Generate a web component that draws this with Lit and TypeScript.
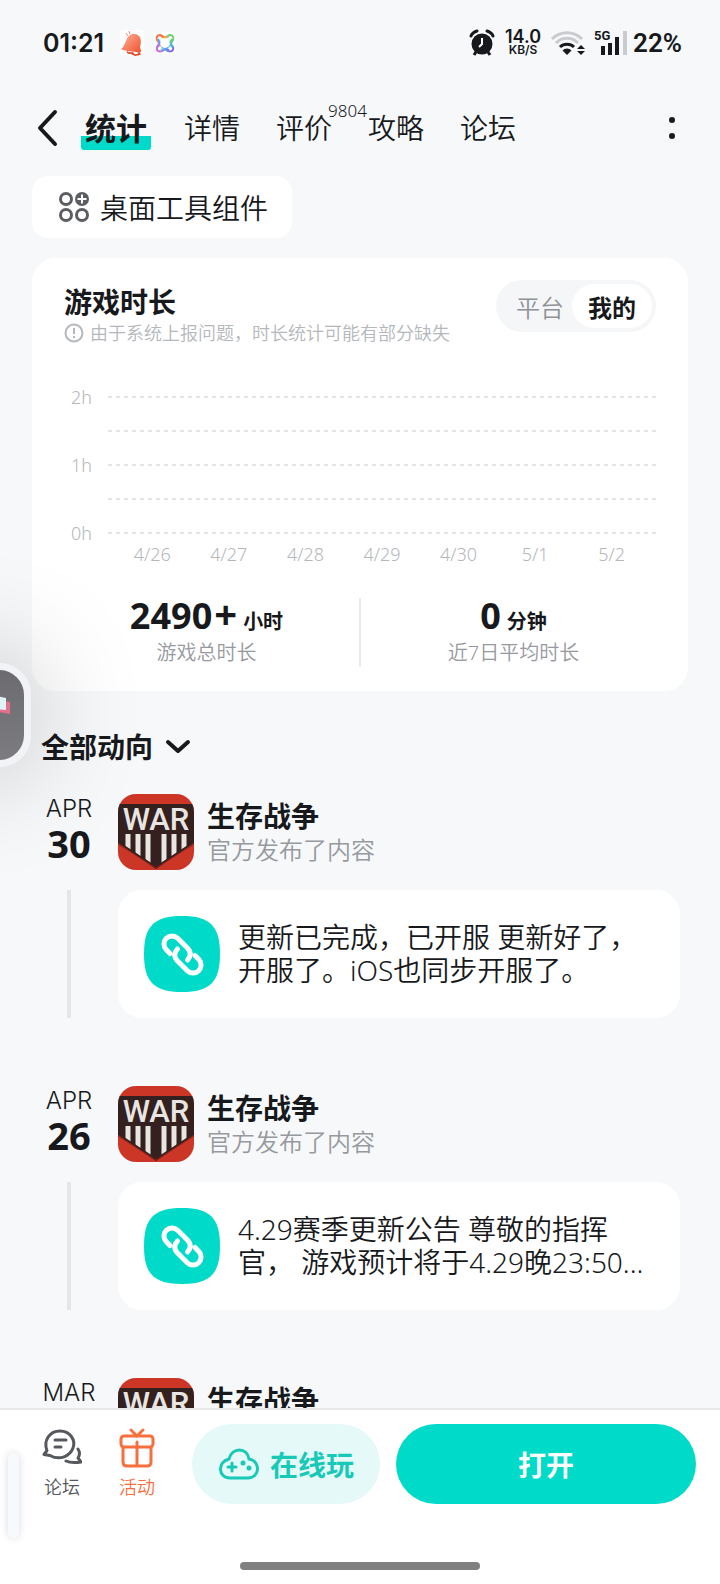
import { LitElement, html, svg, css } from 'lit';
import { customElement, property, state } from 'lit/decorators.js';
import { classMap } from 'lit/directives/class-map.js';

const tabs = [
  { name: '统计' },
  { name: '详情' },
  { name: '评价', count: 9804 },
  { name: '攻略' },
  { name: '论坛' },
];

const days = ['4/26', '4/27', '4/28', '4/29', '4/30', '5/1', '5/2'];
const hours = ['2h', '', '1h', '', '0h'];

const feed = [
  { month: 'APR', day: '30', text: '更新已完成，已开服 更新好了，开服了。iOS也同步开服了。' },
  { month: 'APR', day: '26', text: '4.29赛季更新公告 尊敬的指挥官， 游戏预计将于4.29晚23:50...' },
  { month: 'MAR', day: '', text: '' },
];

@customElement('status-bar')
export class StatusBar extends LitElement {
  static styles = css`
    :host {
      display: flex;
      align-items: center;
      justify-content: space-between;
      height: 86px;
      padding: 0 38px 0 43px;
      font-family: Inter, 'Noto Sans', sans-serif;
      font-weight: 600;
      font-size: 25px;
    }

    .side {
      display: flex;
      align-items: center;
      gap: 10px;
    }

    .time {
      margin-right: 6px;
    }

    .speed {
      display: flex;
      flex-direction: column;
      align-items: center;
      font-size: 18px;
      line-height: 14px;
    }

    .speed small {
      font-size: 12px;
      line-height: 12px;
    }

    .signal {
      display: flex;
      align-items: center;
      gap: 6px;
      font-family: Roboto, sans-serif;
      font-size: 26px;
    }

    .net {
      font: 700 13px Roboto, sans-serif;
    }

    svg {
      display: block;
      overflow: visible;
    }
  `;

  render() {
    return html`
      <div class="side">
        <span class="time">01:21</span>
        <svg width="24" height="26" viewBox="0 0 24 26">
          <defs>
            <linearGradient id="bell" x1="0" y1="0" x2="1" y2="1">
              <stop offset="0" stop-color="#ffb49a" />
              <stop offset="1" stop-color="#f0512c" />
            </linearGradient>
          </defs>
          <rect width="24" height="26" rx="4" fill="#fff" />
          <path d="M1 19C7 15 5 4 14 4c7 0 8 7 6 13l1 4c0 2-3 2-5 1C11 21 4 21 1 19z" fill="url(#bell)" />
          <path d="M7 21c2 2 4 1 6 1 1 3 5 3 6 0l2 2c-1 2-4 1-5 2-2 0-4-2-6-2s-4-1-3-3z" fill="#dc4a26" />
          <path d="M6 3l2 3M9 1l1 3" stroke="#e98a70" stroke-width="1" />
        </svg>
        <svg width="22" height="22" viewBox="0 0 22 22" fill="none" stroke-width="2">
          <defs>
            <linearGradient id="knot" x1="0" y1="0" x2="1" y2="1">
              <stop offset="0" stop-color="#ff5a52" />
              <stop offset=".35" stop-color="#ffb02e" />
              <stop offset=".6" stop-color="#45c8e8" />
              <stop offset="1" stop-color="#8a5cf0" />
            </linearGradient>
            <linearGradient id="knot2" x1="1" y1="0" x2="0" y2="1">
              <stop offset="0" stop-color="#6fdc5a" />
              <stop offset=".5" stop-color="#3fb5f5" />
              <stop offset="1" stop-color="#e05adf" />
            </linearGradient>
          </defs>
          <rect width="22" height="22" rx="4" fill="#fff" />
          <path d="M6 3c-3 0-4 3-3 5 2 4 7 9 11 11 3 1 6 0 5-4C17 11 10 4 6 3z" stroke="url(#knot)" />
          <path d="M16 3c3 0 4 3 3 5-2 4-7 9-11 11-3 1-6 0-5-4C5 11 12 4 16 3z" stroke="url(#knot2)" />
          <circle cx="11" cy="11" r="5" fill="#fff" />
          <path d="M7 4c3 2 5 2 8 0M7 18c3-2 5-2 8 0" stroke="url(#knot)" />
          <path d="M4 7c2 3 2 5 0 8M18 7c-2 3-2 5 0 8" stroke="url(#knot2)" />
        </svg>
      </div>
      <div class="side">
        <svg width="26" height="26" viewBox="0 0 26 26">
          <circle cx="13" cy="14" r="10.5" fill="#17191c" />
          <path d="M2 6c1-3 3-4 6-5M24 6c-1-3-3-4-6-5" stroke="#17191c" stroke-width="3" stroke-linecap="round" fill="none" />
          <path d="M7 22l-2 3M19 22l2 3" stroke="#17191c" stroke-width="3" />
          <path d="M13 8v6l-3 3" stroke="#fff" stroke-width="2" fill="none" />
        </svg>
        <span class="speed">14.0<small>KB/S</small></span>
        <svg width="34" height="26" viewBox="0 0 34 26" fill="none">
          <path d="M1 9a21 21 0 0 1 30 0M5 13a15 15 0 0 1 22 0" stroke="#c9cbce" stroke-width="3" />
          <path d="M9 17a10 10 0 0 1 14 0" stroke="#17191c" stroke-width="3" />
          <path d="M11.500 20.500a6 6 0 0 1 9 0L16 25z" fill="#17191c" />
          <path d="M30 15l4 4h-8zM30 25l4-4h-8z" fill="#17191c" />
        </svg>
        <span class="signal">
          <svg width="32" height="26" viewBox="0 0 32 26">
            <text class="net" x="-1" y="10" fill="#17191c">5G</text>
            <path d="M6 16h4v9h-4zM13 13h4v12h-4zM20 7h4v18h-4z" fill="#17191c" />
            <path d="M28 1h4v24h-4z" fill="#c9cbce" />
          </svg>
          22%
        </span>
      </div>
    `;
  }
}

@customElement('play-time')
export class PlayTime extends LitElement {
  @state() mine = true;

  static styles = css`
    :host {
      display: block;
      padding: 22px 32px 24px;
      border-radius: 24px;
      background: #fff;
    }

    .head {
      display: flex;
      justify-content: space-between;
      align-items: flex-start;
    }

    h2 {
      margin: 4px 0 0;
      font-size: 28px;
      line-height: 36px;
    }

    .note {
      display: flex;
      align-items: center;
      gap: 6px;
      margin: 0;
      font-size: 18px;
      line-height: 26px;
      color: #b4b7bb;
    }

    .switch {
      display: flex;
      padding: 4px;
      border-radius: 26px;
      background: #f4f6f8;
    }

    .switch button {
      height: 44px;
      padding: 0 8px 0 16px;
      border: 0;
      border-radius: 22px;
      background: none;
      font: inherit;
      font-size: 24px;
      color: #8e9196;
    }

    .switch .on {
      padding: 0 16px;
      background: #fff;
      font-weight: 700;
      color: #17191c;
    }

    .row {
      display: flex;
      align-items: center;
      gap: 16px;
      height: 34px;
      font-size: 18px;
      color: #b4b7bb;
    }

    .chart {
      padding-top: 34px;
    }

    .hour {
      width: 28px;
      text-align: right;
    }

    .line {
      flex: 1;
      height: 2px;
      background: repeating-linear-gradient(90deg, #e4e5e7 0 4px, transparent 4px 8px);
    }

    .days {
      display: flex;
      margin-top: -8px;
      padding: 0 6px 0 50px;
      font-size: 18px;
      line-height: 24px;
      color: #b4b7bb;
    }

    .days span {
      flex: 1;
      text-align: center;
    }

    .totals {
      display: flex;
      margin: 32px -10px 0;
    }

    .total {
      flex: 1;
      display: flex;
      flex-direction: column;
      align-items: center;
    }

    .total + .total {
      border-left: 2px solid #e8eaec;
    }

    .value {
      display: flex;
      align-items: baseline;
      gap: 6px;
      height: 41px;
      font-size: 36px;
      line-height: 36px;
      font-weight: 700;
    }

    .plus {
      margin-left: -4px;
      font-size: 40px;
      line-height: 20px;
    }

    .value small {
      font-size: 20px;
      line-height: 20px;
    }

    .label {
      font-size: 20px;
      line-height: 28px;
      color: #96999e;
    }
  `;

  render() {
    return html`
      <div class="head">
        <div>
          <h2>游戏时长</h2>
          <p class="note">
            <svg width="20" height="20" viewBox="0 0 20 20" fill="none" stroke="currentColor" stroke-width="2">
              <circle cx="10" cy="10" r="8.500" />
              <path d="M10 5v6M10 13v2" />
            </svg>
            由于系统上报问题，时长统计可能有部分缺失
          </p>
        </div>
        <div class="switch">
          <button class=${classMap({ on: !this.mine })} @click=${() => (this.mine = false)}>平台</button>
          <button class=${classMap({ on: this.mine })} @click=${() => (this.mine = true)}>我的</button>
        </div>
      </div>
      <div class="chart">
        ${hours.map((h) => html`<div class="row"><span class="hour">${h}</span><span class="line"></span></div>`)}
        <div class="days">${days.map((d) => html`<span>${d}</span>`)}</div>
      </div>
      <div class="totals">
        <div class="total">
          <span class="value">2490<span class="plus">+</span><small>小时</small></span>
          <span class="label">游戏总时长</span>
        </div>
        <div class="total">
          <span class="value">0<small>分钟</small></span>
          <span class="label">近7日平均时长</span>
        </div>
      </div>
    `;
  }
}

@customElement('feed-entry')
export class FeedEntry extends LitElement {
  @property() month = '';
  @property() day = '';
  @property() text = '';

  static styles = css`
    :host {
      display: grid;
      grid-template-columns: 56px 1fr;
      column-gap: 21px;
      row-gap: 20px;
    }

    .date {
      display: flex;
      flex-direction: column;
      align-items: center;
      font-size: 24px;
      line-height: 30px;
    }

    .date b {
      font-size: 38px;
      line-height: 38px;
      font-weight: 700;
    }

    .month {
      font-family: Inter, sans-serif;
      font-weight: 300;
    }

    .who {
      display: flex;
      align-items: center;
      gap: 13px;
    }

    .name {
      margin: 0;
      font-size: 28px;
      line-height: 36px;
    }

    .what {
      margin: 0;
      font-size: 24px;
      line-height: 32px;
      color: #96999e;
    }

    .rail {
      justify-self: center;
      width: 4px;
      background: #e4e6ea;
    }

    .post {
      display: flex;
      align-items: center;
      gap: 18px;
      min-height: 76px;
      padding: 26px;
      border-radius: 24px;
      background: #fff;
      color: inherit;
      text-decoration: none;
      font-size: 28px;
      line-height: 33px;
    }

    .war {
      font: 500 31px Roboto, sans-serif;
    }

    svg {
      display: block;
      flex: none;
    }
  `;

  render() {
    return html`
      <div class="date"><span class="month">${this.month}</span><b>${this.day}</b></div>
      <div class="who">
        <svg width="76" height="76" viewBox="0 0 76 76">
          <defs>
            <clipPath id="round"><rect width="76" height="76" rx="18" /></clipPath>
            <clipPath id="shield"><path d="M0 10h76v37L38 72 0 47z" /></clipPath>
          </defs>
          <g clip-path="url(#round)">
            <rect width="76" height="76" fill="#cb3626" />
            <path d="M0 10h76v39L38 75 0 49z" fill="#33201f" />
            <path d="M0 50l38 24 38-24" fill="none" stroke="#8a2219" stroke-width="1" />
            <text class="war" x="38" y="36" fill="#e9e6e2" text-anchor="middle">WAR</text>
            <path d="M10 40v36M20 40v36M30 40v36M46 40v36M56 40v36M66 40v36" clip-path="url(#shield)" stroke="#e9e6e2" stroke-width="5" />
          </g>
        </svg>
        <div>
          <h3 class="name">生存战争</h3>
          <p class="what">官方发布了内容</p>
        </div>
      </div>
      <span class="rail"></span>
      <a class="post" href="#">
        <svg width="76" height="76" viewBox="0 0 76 76" fill="none" stroke="#fff" stroke-width="5" stroke-linecap="round">
          <path d="M38 0C66 0 76 10 76 38S66 76 38 76 0 66 0 38 10 0 38 0z" fill="#00dac8" stroke="none" />
          <path d="M26 37.500L22.300 33.700A8 8 0 0 1 33.700 22.300L43.700 32.300Q49 38 43.500 44" />
          <path d="M51 39.500L54.700 43.300A8 8 0 0 1 43.300 54.700L33.300 44.700Q28 39 33.500 33" />
        </svg>
        <span>${this.text}</span>
      </a>
    `;
  }
}

const forumIcon = svg`
  <path d="M8 27.500l-6-1 3-4C1 12 8 3 18 3s16 9 13 17-13 13-23 7.500z" />
  <path d="M13 12h11M13 19h6" />
  <path d="M36 21c2 3 2 6 0 9l3 4c-6 1-11 1-15-1" />
`;

const giftIcon = svg`
  <path d="M14 2l6 6 6-6" />
  <rect x="4" y="8" width="32" height="11" rx="3" />
  <path d="M6 19v15q0 4 4 4h20q4 0 4-4V19M20 14v23" />
`;

@customElement('app-root')
export class AppRoot extends LitElement {
  @state() active = '统计';

  static styles = css`
    :host {
      display: flex;
      flex-direction: column;
      height: 100vh;
      overflow: hidden;
      position: relative;
      background: #f6f8fa;
      color: #17191c;
      font-family: 'Noto Sans', 'Noto Sans CJK SC', sans-serif;
      font-weight: 350;
    }

    button {
      border: 0;
      padding: 0;
      background: none;
      color: inherit;
      font: inherit;
    }

    svg {
      display: block;
      flex: none;
    }

    nav {
      display: flex;
      align-items: center;
      height: 84px;
      margin-bottom: 6px;
      padding: 0 42px 0 36px;
    }

    .tabs {
      flex: 1;
      display: flex;
      align-items: center;
      gap: 36px;
      margin-left: 21px;
    }

    .tab {
      position: relative;
      font-size: 28px;
      line-height: 44px;
    }

    .tab.on {
      margin-right: -3px;
      padding: 0 4px;
      border-radius: 3px;
      background: linear-gradient(#00dac8, #00dac8) bottom / 100% 14px no-repeat;
      font-size: 31px;
      font-weight: 700;
    }

    .count {
      position: absolute;
      left: 52px;
      top: -6px;
      font-size: 17px;
      line-height: 22px;
    }

    main {
      flex: 1;
      min-height: 0;
      overflow: hidden;
      padding: 0 32px;
    }

    .widget {
      display: flex;
      align-items: center;
      gap: 10px;
      height: 62px;
      margin-bottom: 20px;
      padding: 0 24px 0 26px;
      border-radius: 16px;
      background: #fff;
      font-size: 28px;
    }

    .filter {
      display: flex;
      align-items: center;
      gap: 12px;
      margin: 36px 0 27px 9px;
      font-size: 28px;
      line-height: 40px;
      font-weight: 700;
    }

    .feed {
      display: flex;
      flex-direction: column;
      gap: 68px;
      padding: 0 8px 0 9px;
    }

    .bottom {
      border-top: 2px solid #e6e8ea;
      background: #fff;
    }

    .actions {
      display: flex;
      align-items: center;
      gap: 16px;
      padding: 14px 24px 0 42px;
    }

    .small {
      display: flex;
      flex-direction: column;
      align-items: center;
      gap: 6px;
      width: 40px;
      margin-right: 19px;
      font-size: 18px;
      line-height: 26px;
      color: #55585d;
    }

    .small.hot {
      color: #f76f3d;
    }

    .play,
    .open {
      display: flex;
      align-items: center;
      justify-content: center;
      gap: 10px;
      height: 80px;
      border-radius: 40px;
      font-size: 28px;
      font-weight: 700;
    }

    .play {
      padding: 0 26px;
      background: #e4f9f8;
      color: #18c9b8;
    }

    .open {
      flex: 1;
      background: #00dac8;
      color: #fff;
    }

    .home {
      width: 240px;
      height: 8px;
      margin: 58px auto 14px;
      border-radius: 4px;
      background: #808080;
    }

    .bubble {
      position: absolute;
      left: -83px;
      top: 663px;
      width: 100px;
      height: 90px;
      border: 7px solid #f2f3f6;
      border-radius: 32px;
      background: linear-gradient(#6c6c70, #7c7c80);
      box-shadow: 0 0 110px rgba(0, 0, 0, 0.25);
    }

    .flag {
      position: absolute;
      right: 14px;
      top: 24px;
    }

    .handle {
      position: absolute;
      left: 8px;
      bottom: 46px;
      width: 11px;
      height: 85px;
      border-radius: 6px;
      background: #f6f9fe;
      box-shadow: 0 0 8px rgba(0, 0, 0, 0.14);
    }
  `;

  render() {
    return html`
      <status-bar></status-bar>
      <nav>
        <button aria-label="返回">
          <svg width="24" height="40" viewBox="0 0 24 40" fill="none" stroke="currentColor" stroke-width="4" stroke-linecap="round" stroke-linejoin="round">
            <path d="M19 4L4 20l15 16" />
          </svg>
        </button>
        <div class="tabs">
          ${tabs.map(
            (t) => html`
              <button class=${classMap({ tab: true, on: t.name === this.active })} @click=${() => (this.active = t.name)}>
                ${t.name}${t.count ? html`<span class="count">${t.count}</span>` : ''}
              </button>
            `
          )}
        </div>
        <button aria-label="更多">
          <svg width="12" height="24" viewBox="0 0 12 24" fill="currentColor">
            <circle cx="6" cy="4" r="3" />
            <circle cx="6" cy="20" r="3" />
          </svg>
        </button>
      </nav>
      <main>
        <button class="widget">
          <svg width="32" height="32" viewBox="0 0 32 32" fill="none" stroke="#5a5d62" stroke-width="3">
            <circle cx="8" cy="8" r="5.500" />
            <circle cx="8" cy="24" r="5.500" />
            <circle cx="24" cy="24" r="5.500" />
            <circle cx="24" cy="8" r="7" fill="#5a5d62" stroke="none" />
            <path d="M24 3.500v9M19.500 8h9" stroke="#fff" stroke-width="2" />
          </svg>
          桌面工具组件
        </button>
        <play-time></play-time>
        <button class="filter">
          全部动向
          <svg width="26" height="16" viewBox="0 0 26 16" fill="none" stroke="currentColor" stroke-width="4" stroke-linecap="round" stroke-linejoin="round">
            <path d="M3 3l10 9L23 3" />
          </svg>
        </button>
        <div class="feed">
          ${feed.map((f) => html`<feed-entry .month=${f.month} .day=${f.day} .text=${f.text}></feed-entry>`)}
        </div>
      </main>
      <div class="bottom">
        <div class="actions">
          <button class="small">
            <svg width="40" height="40" viewBox="0 0 40 40" fill="none" stroke="currentColor" stroke-width="3" stroke-linecap="round" stroke-linejoin="round">${forumIcon}</svg>
            论坛
          </button>
          <button class="small hot">
            <svg width="40" height="40" viewBox="0 0 40 40" fill="none" stroke="currentColor" stroke-width="3" stroke-linecap="round" stroke-linejoin="round">${giftIcon}</svg>
            活动
          </button>
          <button class="play">
            <svg width="42" height="32" viewBox="0 0 42 32" fill="none" stroke="currentColor" stroke-width="3" stroke-linecap="round">
              <path d="M11 11C14-1 29-1 31 11c12 2 11 19-1 19H12C0 30-1 14 11 11z" />
              <path d="M10 19h8M14 15v8" />
              <circle cx="25" cy="15" r="2.500" fill="currentColor" stroke="none" />
              <circle cx="31" cy="20" r="2.500" fill="currentColor" stroke="none" />
            </svg>
            在线玩
          </button>
          <button class="open">打开</button>
        </div>
        <div class="home"></div>
      </div>
      <div class="bubble">
        <svg class="flag" width="24" height="20" viewBox="0 0 24 20">
          <path d="M0 4l24 4v12L0 16z" fill="#e5708c" />
          <path d="M0 0l20 4v12L0 14z" fill="#dff3f4" />
        </svg>
      </div>
      <div class="handle"></div>
    `;
  }
}
